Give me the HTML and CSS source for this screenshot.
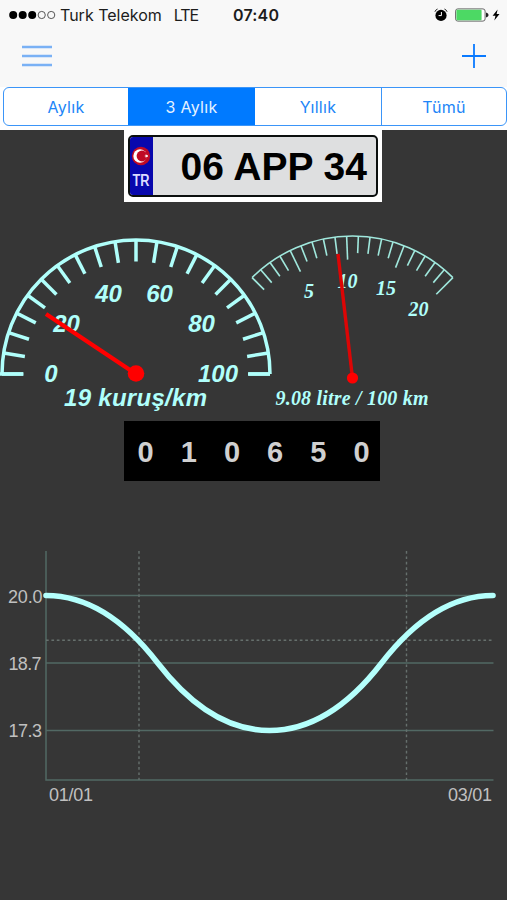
FILE: index.html
```html
<!DOCTYPE html>
<html lang="tr">
<head>
<meta charset="utf-8">
<title>06 APP 34</title>
<link rel="stylesheet" href="styles.css">
</head>
<body>
<header class="top">
  <div class="status">
    <div class="status-left">
      <svg class="signal" width="47" height="10" viewBox="0 0 47 10"><g fill="#000"><circle cx="4.2" cy="5" r="4"/><circle cx="13.7" cy="5" r="4"/><circle cx="23.2" cy="5" r="4"/></g><g fill="none" stroke="#444" stroke-width=".9"><circle cx="32.7" cy="5" r="3.6"/><circle cx="42.2" cy="5" r="3.6"/></g></svg>
      <span class="carrier">Turk Telekom</span>
      <span class="network">LTE</span>
    </div>
    <span class="clock">07:40</span>
    <div class="status-right">
      <svg width="14" height="14" viewBox="0 0 14 14"><circle cx="7" cy="7.4" r="5.6"/><path d="M.9 3.8A4 4 0 0 1 3.6 1M10.4 1a4 4 0 0 1 2.7 2.8" fill="none" stroke="#333" stroke-width="1"/><path d="M7.4 4v3.6H4.6" fill="none" stroke="#fff" stroke-width="1"/></svg>
      <svg class="battery" width="34" height="14" viewBox="0 0 34 14"><rect x=".6" y=".9" width="29.5" height="12.2" rx="2.2" fill="#fff" stroke="#666"/><rect x="1.4" y="1.7" width="25.2" height="10.6" rx="1" fill="#4cd964"/><path d="M31 4.5q2.6.8 2.6 2.5t-2.6 2.5z" fill="#222"/></svg>
      <svg width="8" height="14" viewBox="0 0 8 14"><path d="M5.6 1.4L.6 7.8h2.9L2.3 12.6l5.2-6.5H4.6z"/></svg>
    </div>
  </div>
  <nav class="nav">
    <svg width="30" height="22" viewBox="0 0 30 22"><path d="M0 2h30M0 11h30M0 20h30" stroke="#7ab1f5" stroke-width="2.4"/></svg>
    <svg width="24" height="24" viewBox="0 0 24 24"><path d="M0 12h24M12 0v24" stroke="#0a7aff" stroke-width="1.8"/></svg>
  </nav>
  <div class="segments">
    <div class="segment">Aylık</div>
    <div class="segment active">3 Aylık</div>
    <div class="segment">Yıllık</div>
    <div class="segment">Tümü</div>
  </div>
</header>
<main class="dashboard">
  <div class="plate-frame">
    <div class="plate">
      <div class="plate-country">
        <svg width="20" height="20" viewBox="-1 0 20 20"><circle cx="9" cy="10" r="9.2" fill="#c00a25"/><circle cx="8" cy="10" r="6.7" fill="#fff"/><circle cx="10" cy="10" r="5.4" fill="#c00a25"/><path d="M12.2 10l1.5-.5.1-1.6 1 1.3 1.5-.5-.9 1.3.9 1.3-1.5-.5-1 1.3-.1-1.6z" fill="#fff"/></svg>
        <svg width="22" height="22" viewBox="0 0 22 22"><text x="2.5" y="16.500" textLength="17" lengthAdjust="spacingAndGlyphs">TR</text></svg>
      </div>
      <div class="plate-number">06 APP 34</div>
    </div>
  </div>

  <svg class="gauges" width="507" height="200" viewBox="0 220 507 200">
    <g class="cost">
      <path d="M0 374H23M270 374H248"/>
      <path d="M2 374A134 134 0 0 1 270 374"/>
      <g id="cost-ticks"></g>
    </g>
    <g class="cost-text">
      <text x="51" y="381.5">0</text>
      <text x="66.5" y="332">20</text>
      <text x="108.5" y="302">40</text>
      <text x="159.5" y="302">60</text>
      <text x="201.5" y="332">80</text>
      <text x="218" y="381.5">100</text>
      <text x="135.5" y="406" textLength="143">19 kuruş/km</text>
    </g>
    <path d="M136 374L46 314" stroke="#f00" stroke-width="4.2"/>
    <circle cx="136" cy="373.5" r="8.3" fill="#f00"/>

    <g class="litre">
      <path d="M252.1 277.6A142 142 0 0 1 452.9 277.6"/>
      <g id="litre-ticks"></g>
    </g>
    <g class="litre-text">
      <text x="309" y="298">5</text>
      <text x="347.5" y="288">10</text>
      <text x="386" y="294.5">15</text>
      <text x="418.5" y="316">20</text>
      <text x="352" y="405" textLength="153">9.08 litre / 100 km</text>
    </g>
    <path d="M352.5 378L338 254" stroke="#dc0505" stroke-width="3.4"/>
    <circle cx="352.5" cy="378" r="5.6" fill="#f00"/>
  </svg>

  <div class="odometer"><span>0</span><span>1</span><span>0</span><span>6</span><span>5</span><span>0</span></div>

  <svg class="chart" width="507" height="270" viewBox="0 540 507 270">
    <path class="grid" d="M46 551V780H493.5M46 595.5H493.5M46 663H493.5M46 730.5H493.5"/>
    <path class="guide" d="M139 551V780M406.5 551V780M46 640.3H493"/>
    <path class="curve" d="M46 595.5Q105.6 595.5 157.7 663T269.5 730.5Q329.4 730.5 381.6 663T493 595.5"/>
    <g class="axis">
      <text x="8" y="602.5" textLength="34.5">20.0</text>
      <text x="8.5" y="670" textLength="33">18.7</text>
      <text x="8.5" y="737" textLength="33.5">17.3</text>
      <text x="49" y="800.5" textLength="44">01/01</text>
      <text x="448" y="800.5" textLength="44">03/01</text>
    </g>
  </svg>
</main>
<script src="gauges.js"></script>
</body>
</html>
```
FILE: styles.css
```css
* { box-sizing: border-box; }
body {
  margin: 0;
  width: 507px;
  height: 900px;
  overflow: hidden;
  background: #363636;
  font-family: Inter, "Liberation Sans", sans-serif;
}
svg { display: block; flex: none; }
.top { height: 130px; background: linear-gradient(#f8f8f8 87px, #fff 87px); }
.status {
  height: 30px;
  padding: 0 7px 0 9px;
  display: grid;
  grid-template-columns: 224px auto 1fr;
  align-items: center;
  font-size: 16px;
  color: #1c1c1c;
}
.status-left, .status-right { display: flex; align-items: center; }
.carrier { margin-left: 4px; }
.network { margin-left: 12px; letter-spacing: -1.1px; }
.clock { font-weight: 600; letter-spacing: .2px; }
.status-right { justify-content: flex-end; }
.battery { margin: 0 3px 0 7px; }
.nav {
  height: 57px;
  padding: 0 21px 5px 22px;
  display: flex;
  align-items: center;
  justify-content: space-between;
}
.segments {
  height: 39px;
  margin: 0 0 0 3px;
  display: grid;
  grid-template-columns: 124px 127px 126px 1fr;
  border: 1.5px solid #3b95f8;
  border-radius: 6px;
  overflow: hidden;
  background: #fff;
}
.segment {
  display: flex;
  align-items: center;
  justify-content: center;
  font-size: 16px;
  letter-spacing: .3px;
  color: #2185f7;
}
.segment:last-child { border-left: 1.5px solid #3b95f8; }
.segment.active { background: #007aff; color: #e5f2ff; }
.dashboard { display: flex; flex-direction: column; align-items: flex-start; }
.plate-frame {
  width: 258px;
  height: 72px;
  margin-left: 124px;
  padding: 5px 4px;
  background: #fff;
}
.plate {
  height: 62px;
  display: flex;
  border: 2.5px solid #0b0f0e;
  border-radius: 5px;
  background: #dedfe0;
  overflow: hidden;
}
.plate-country {
  width: 22.5px;
  background: #0808ad;
  display: flex;
  flex-direction: column;
  align-items: center;
  padding-top: 9px;
  gap: 3px;
  fill: #dcdcff;
  font: bold 16px "Liberation Sans", sans-serif;
}
.plate-number {
  flex: 1;
  padding: 7px 0 0 28px;
  white-space: nowrap;
  font: bold 39px/46px "Liberation Sans", sans-serif;
  color: #000;
}
.gauges { margin-top: 18px; }
.cost { fill: none; stroke: #b0fffb; stroke-width: 3.5; }
.cost-text {
  fill: #b0fffb;
  font: italic bold 24px "Liberation Sans", sans-serif;
  text-anchor: middle;
}
.litre { fill: none; stroke: #a0e8dd; stroke-width: 1.6; }
.litre-text {
  fill: #b0fffb;
  font: italic bold 20px "Liberation Serif", serif;
  text-anchor: middle;
}
.odometer {
  width: 256px;
  height: 60px;
  margin: 1px 0 0 124px;
  padding-top: 2px;
  display: grid;
  grid-template-columns: repeat(6, 43.2px);
  align-items: center;
  text-align: center;
  background: #000;
  color: #d0d0d0;
  font: bold 29px "Liberation Sans", sans-serif;
}
.chart { margin-top: 59px; }
.grid { fill: none; stroke: #526964; stroke-width: 1.5; }
.curve { fill: none; stroke: #b4fffc; stroke-width: 5.6; stroke-linecap: round; }
.guide { fill: none; stroke: #66706d; stroke-width: 1.4; stroke-dasharray: 2.7 2.7; }
.axis { fill: #c0c0c0; font: 18px "Liberation Sans", sans-serif; }
```
FILE: gauges.js
```js
function drawTicks(id, cx, cy, radius, count, start, sweep, lengthOf) {
  const group = document.getElementById(id);
  for (let i = 0; i < count; i++) {
    const angle = (start + sweep * i / (count - 1)) * Math.PI / 180;
    const inner = radius - lengthOf(i);
    const line = document.createElementNS('http://www.w3.org/2000/svg', 'line');
    line.setAttribute('x1', cx + radius * Math.sin(angle));
    line.setAttribute('y1', cy - radius * Math.cos(angle));
    line.setAttribute('x2', cx + inner * Math.sin(angle));
    line.setAttribute('y2', cy - inner * Math.cos(angle));
    group.appendChild(line);
  }
}
drawTicks('cost-ticks', 136, 374, 134, 21, -90, 180, () => 21.5);
drawTicks('litre-ticks', 352.5, 378, 142, 20, -45, 90, i => (i + 1) % 5 ? 17 : 23.5);
```
